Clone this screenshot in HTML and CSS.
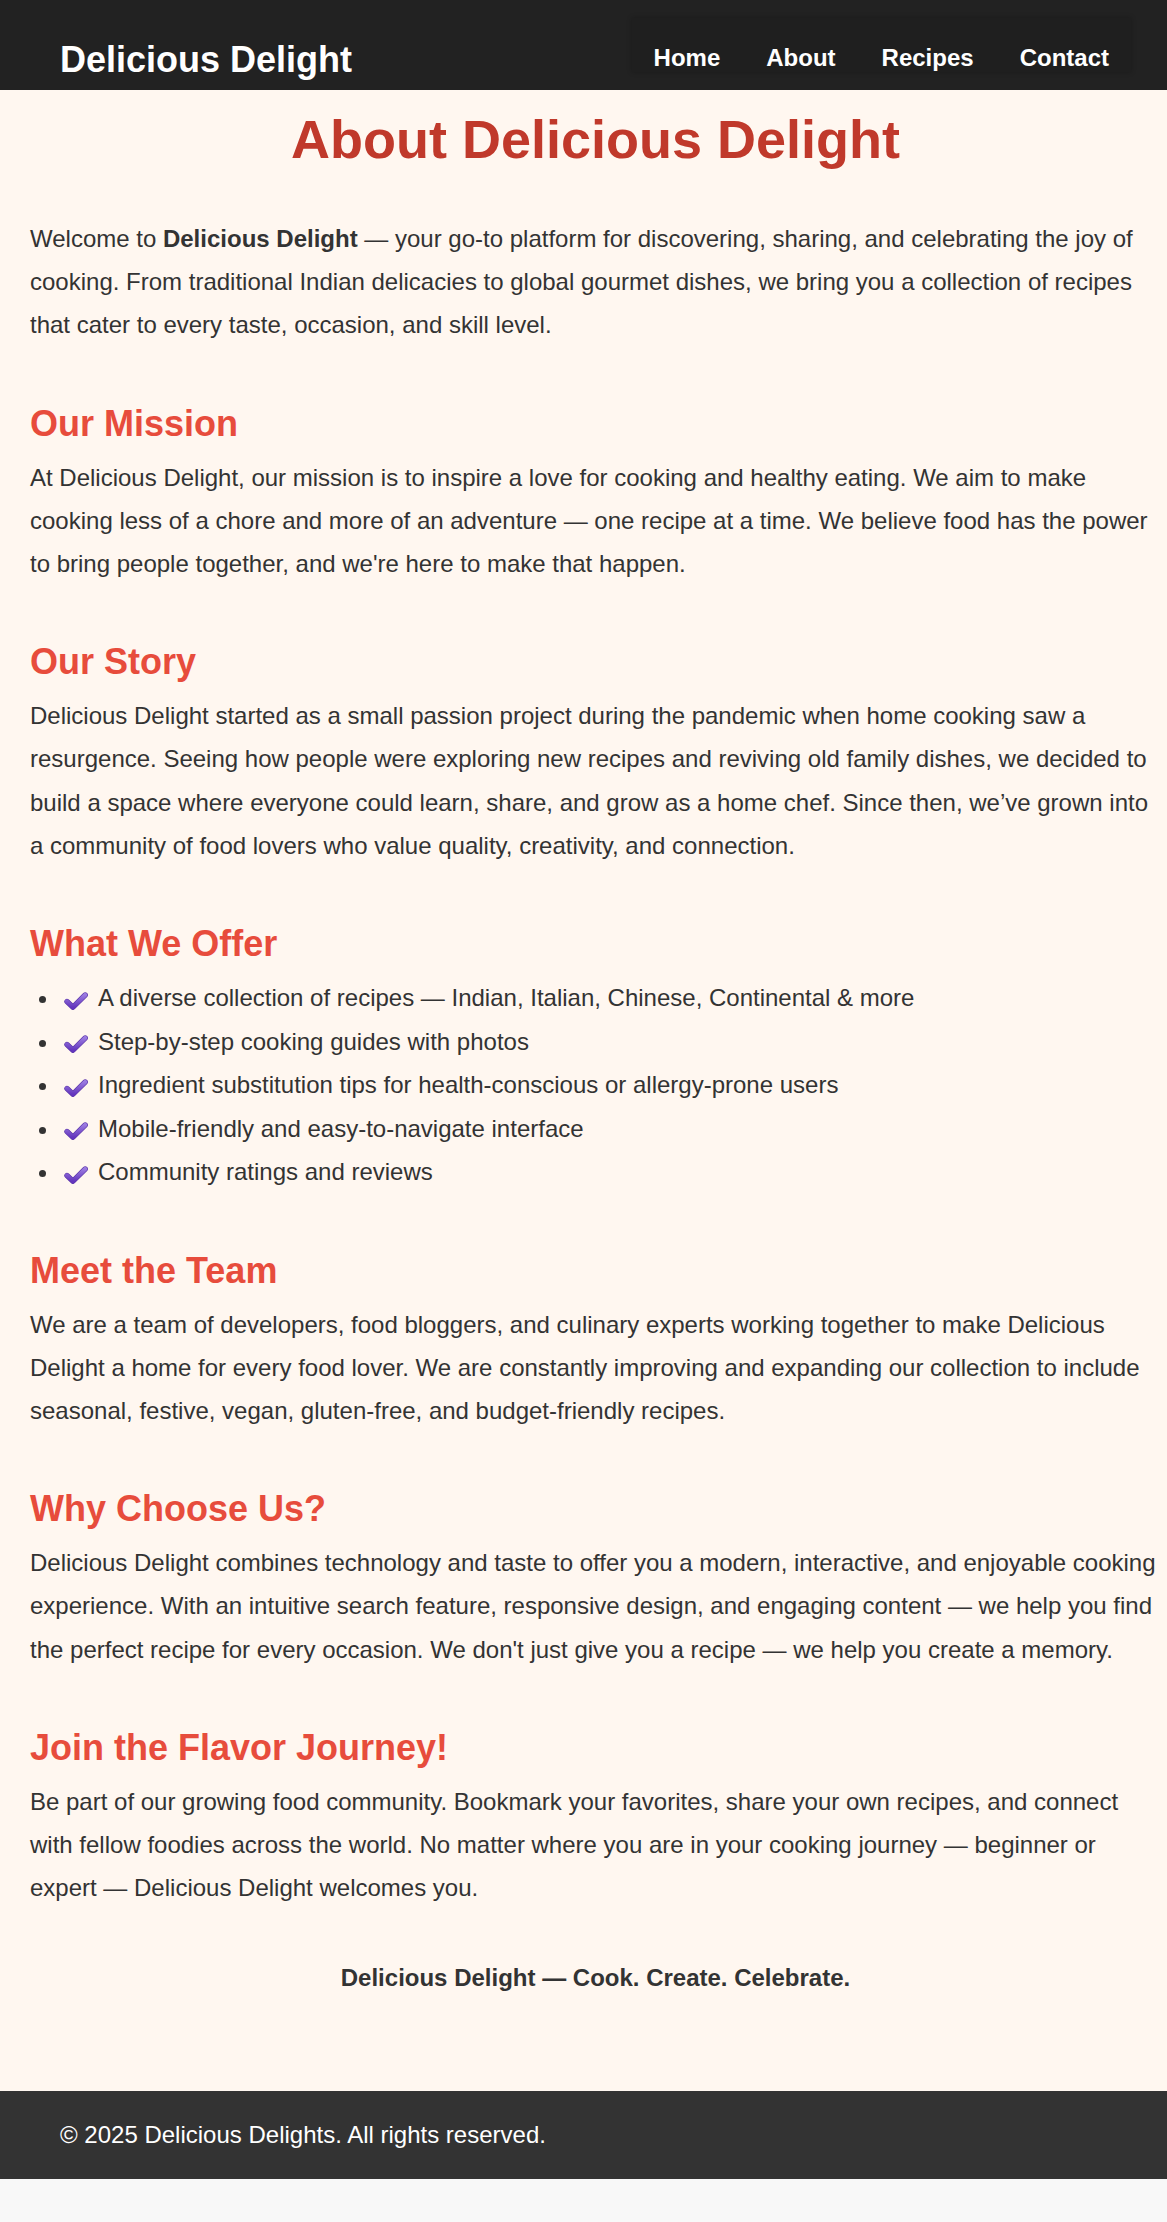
FILE: index.html
```html
<!DOCTYPE html>
<html lang="en">
<head>
<meta charset="utf-8">
<title>About - Delicious Delight</title>
<link rel="stylesheet" href="styles.css">
</head>
<body>
<header class="site-header">
  <div class="logo">Delicious Delight</div>
  <nav class="main-nav">
    <a href="#">Home</a>
    <a href="#">About</a>
    <a href="#">Recipes</a>
    <a href="#">Contact</a>
  </nav>
</header>

<main class="about">
  <h1 class="page-title">About Delicious Delight</h1>

  <p>Welcome to <strong>Delicious Delight</strong> — your go-to platform for discovering, sharing, and celebrating the joy of cooking. From traditional Indian delicacies to global gourmet dishes, we bring you a collection of recipes that cater to every taste, occasion, and skill level.</p>

  <h2>Our Mission</h2>
  <p>At Delicious Delight, our mission is to inspire a love for cooking and healthy eating. We aim to make cooking less of a chore and more of an adventure — one recipe at a time. We believe food has the power to bring people together, and we're here to make that happen.</p>

  <h2>Our Story</h2>
  <p>Delicious Delight started as a small passion project during the pandemic when home cooking saw a resurgence. Seeing how people were exploring new recipes and reviving old family dishes, we decided to build a space where everyone could learn, share, and grow as a home chef. Since then, we’ve grown into a community of food lovers who value quality, creativity, and connection.</p>

  <h2>What We Offer</h2>
  <ul class="offer-list">
    <li><svg class="check" viewBox="0 0 24 18" aria-hidden="true"><use href="#chk"/></svg>A diverse collection of recipes — Indian, Italian, Chinese, Continental &amp; more</li>
    <li><svg class="check" viewBox="0 0 24 18" aria-hidden="true"><use href="#chk"/></svg>Step-by-step cooking guides with photos</li>
    <li><svg class="check" viewBox="0 0 24 18" aria-hidden="true"><use href="#chk"/></svg>Ingredient substitution tips for health-conscious or allergy-prone users</li>
    <li><svg class="check" viewBox="0 0 24 18" aria-hidden="true"><use href="#chk"/></svg>Mobile-friendly and easy-to-navigate interface</li>
    <li><svg class="check" viewBox="0 0 24 18" aria-hidden="true"><use href="#chk"/></svg>Community ratings and reviews</li>
  </ul>

  <h2>Meet the Team</h2>
  <p>We are a team of developers, food bloggers, and culinary experts working together to make Delicious Delight a home for every food lover. We are constantly improving and expanding our collection to include seasonal, festive, vegan, gluten-free, and budget-friendly recipes.</p>

  <h2>Why Choose Us?</h2>
  <p>Delicious Delight combines technology and taste to offer you a modern, interactive, and enjoyable cooking experience. With an intuitive search feature, responsive design, and engaging content — we help you find the perfect recipe for every occasion. We don't just give you a recipe — we help you create a memory.</p>

  <h2>Join the Flavor Journey!</h2>
  <p>Be part of our growing food community. Bookmark your favorites, share your own recipes, and connect with fellow foodies across the world. No matter where you are in your cooking journey — beginner or expert — Delicious Delight welcomes you.</p>

  <p class="tagline"><strong>Delicious Delight — Cook. Create. Celebrate.</strong></p>
</main>

<footer class="site-footer">
  <p>© 2025 Delicious Delights. All rights reserved.</p>
</footer>

<svg class="defs" width="0" height="0" aria-hidden="true">
  <defs>
    <linearGradient id="chkgrad" x1="0" y1="0" x2="0" y2="1">
      <stop offset="0" stop-color="#9a7ae0"/>
      <stop offset="1" stop-color="#6335bd"/>
    </linearGradient>
    <symbol id="chk" viewBox="0 0 24 18">
      <path d="M3 9.5 L9 15.2 L21.2 3" fill="none" stroke="#5a34a8" stroke-width="5.4" stroke-linecap="round" stroke-linejoin="round"/>
      <path d="M3 9.5 L9 15.2 L21.2 3" fill="none" stroke="url(#chkgrad)" stroke-width="4.2" stroke-linecap="round" stroke-linejoin="round"/>
    </symbol>
  </defs>
</svg>
</body>
</html>
```

FILE: styles.css
```css
html {
  background: #f8f8f8;
}

body {
  margin: 0;
  background: #f8f8f8;
  font-family: "Liberation Sans", Arial, sans-serif;
  color: #333;
}

.site-header {
  display: flex;
  justify-content: space-between;
  align-items: flex-start;
  height: 90px;
  box-sizing: border-box;
  padding: 0 36px 0 60px;
  background: #222;
}

.logo {
  margin-top: 39px;
  font-size: 36px;
  line-height: 41px;
  font-weight: bold;
  color: #fff;
}

.main-nav {
  display: flex;
  gap: 46px;
  margin-top: 18px;
  height: 54px;
  box-sizing: border-box;
  padding: 26px 22px 0;
  background: #1f1f1f;
  box-shadow: 0 0 5px rgba(0, 0, 0, 0.25);
}

.main-nav a {
  color: #fff;
  text-decoration: none;
  font-size: 24px;
  line-height: 28px;
  font-weight: bold;
}

.about {
  background: #fff7f0;
  padding: 18px 6px 91px 30px;
}

.page-title {
  margin: 0 0 47px;
  font-size: 54px;
  line-height: 62px;
  text-align: center;
  color: #c0392b;
}

.about p {
  margin: 0;
  font-size: 24px;
  line-height: 43.2px;
}

.about h2 {
  margin: 56px 0 12px;
  font-size: 36px;
  line-height: 41px;
  color: #e74c3c;
}

.offer-list {
  margin: 1px 0 0;
  padding-left: 30px;
  font-size: 24px;
  line-height: 43.5px;
}

.check {
  width: 24px;
  height: 18px;
  margin: 0 10px 0 4px;
  vertical-align: -3.5px;
}

.about .tagline {
  margin-top: 47px;
  text-align: center;
}

.site-footer {
  background: #333;
  color: #fff;
  padding: 22px 60px;
}

.site-footer p {
  margin: 0;
  font-size: 24px;
  line-height: 44px;
}

.defs {
  position: absolute;
  width: 0;
  height: 0;
}
```
